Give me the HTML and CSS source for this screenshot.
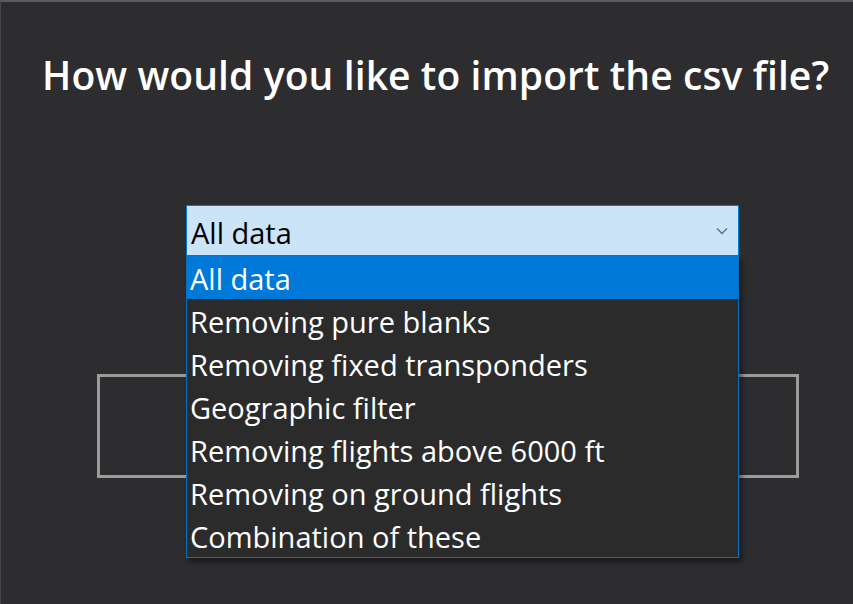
FILE: index.html
```html
<!DOCTYPE html>
<html>
<head>
<meta charset="utf-8">
<link rel="stylesheet" href="styles.css">
</head>
<body>
<div class="window">
  <h1 class="title">How would you like to import the csv file?</h1>
  <div class="combo-wrap">
    <div class="combo">
      <span class="combo-text">All data</span>
      <svg class="chev" width="12" height="8" viewBox="0 0 12 8"><path d="M1 1.5 L6 6.5 L11 1.5" fill="none" stroke="#6d6d6d" stroke-width="1.4"/></svg>
    </div>
    <ul class="list">
      <li class="item selected">All data</li>
      <li class="item">Removing pure blanks</li>
      <li class="item">Removing fixed transponders</li>
      <li class="item">Geographic filter</li>
      <li class="item">Removing flights above 6000 ft</li>
      <li class="item">Removing on ground flights</li>
      <li class="item">Combination of these</li>
    </ul>
  </div>
  <div class="button"></div>
</div>
</body>
</html>
```
FILE: styles.css
```css
html, body {
  margin: 0;
  padding: 0;
  background: #2d2d30;
}
.window {
  width: 853px;
  height: 604px;
  box-sizing: border-box;
  border-top: 2px solid #5b5b5e;
  border-left: 1px solid #48484b;
  background: #2d2d30;
  overflow: hidden;
  font-family: "Open Sans", "Noto Sans", sans-serif;
}
.title {
  margin: 0;
  padding: 47px 0 0 41px;
  font-size: 39px;
  font-weight: 600;
  line-height: 52px;
  letter-spacing: 0.1px;
  color: #ffffff;
  white-space: nowrap;
}
.combo-wrap {
  position: relative;
  margin: 104px 0 0 185px;
  width: 553px;
}
.combo {
  height: 51px;
  box-sizing: border-box;
  background: #cce4f7;
  border: 1px solid #0078d7;
  display: flex;
  align-items: center;
  justify-content: space-between;
  padding: 0 10px 0 4px;
}
.combo-text {
  font-size: 29px;
  color: #000;
  line-height: 1;
  padding-top: 3px;
}
.list {
  position: absolute;
  left: 0;
  top: 51px;
  width: 553px;
  box-sizing: border-box;
  margin: 0;
  padding: 0;
  list-style: none;
  background: #2b2b2b;
  border: 1px solid #0b6fc0;
  border-top: none;
  box-shadow: 3px 4px 5px rgba(0,0,0,0.45);
  z-index: 2;
}
.item {
  height: 43px;
  line-height: 45px;
  padding-left: 3px;
  font-size: 29px;
  color: #ffffff;
  white-space: nowrap;
  overflow: hidden;
}
.item.selected {
  background: #0078d7;
}
.button {
  margin: 118px 0 0 96px;
  width: 702px;
  height: 104px;
  box-sizing: border-box;
  border: 3px solid #9b9b9b;
}
```
